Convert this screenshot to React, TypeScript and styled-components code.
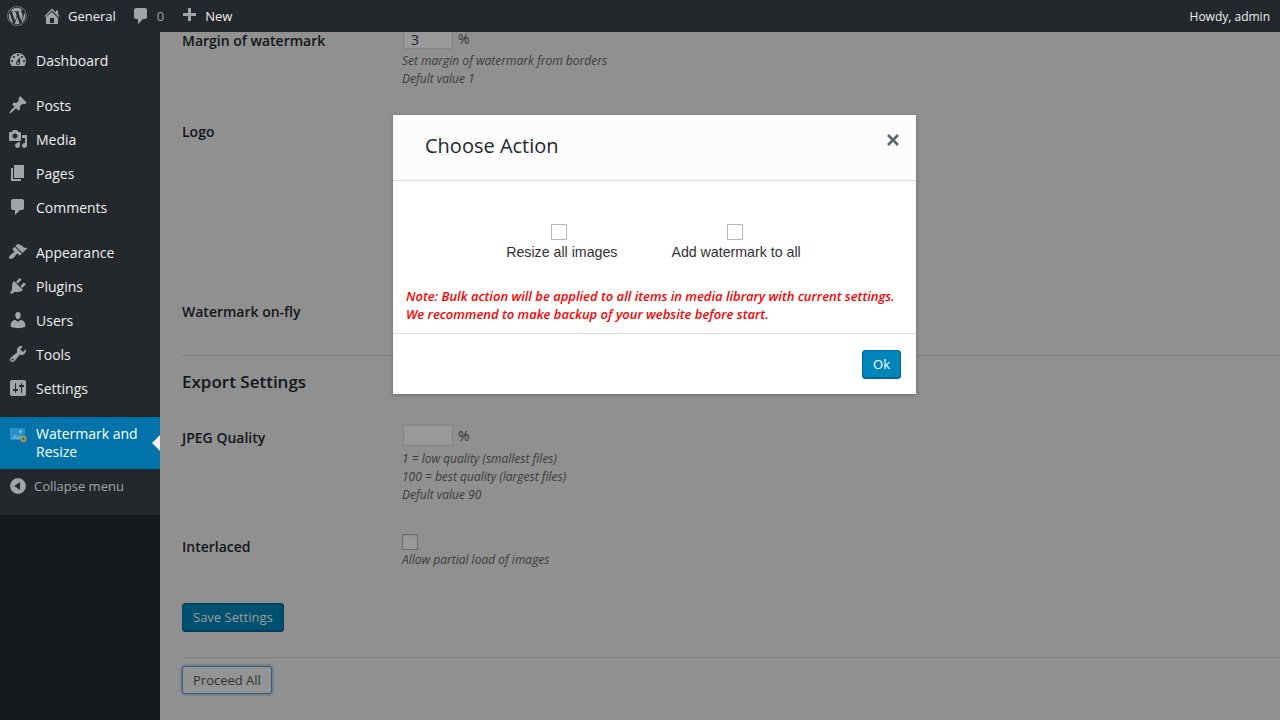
import React from 'react'
import styled, { createGlobalStyle } from 'styled-components'
import { FaWordpress } from 'react-icons/fa'

const icons: Record<string, string> = {
  home: 'M16 8.5l1.53 1.53-1.06 1.06L10 4.62l-6.47 6.47-1.06-1.06L10 2.5l4 4v-2h2v4zm-6-2.46l6 5.99V18H4v-6.97zM12 17v-5H8v5h4z',
  plus: 'M17 7v3h-5v5H9v-5H4V7h5V2h3v5h5z',
  dashboard:
    'M3.76 16h12.48c1.1-1.37 1.76-3.11 1.76-5 0-4.42-3.58-8-8-8s-8 3.58-8 8c0 1.89.66 3.63 1.76 5zM10 4c.55 0 1 .45 1 1s-.45 1-1 1-1-.45-1-1 .45-1 1-1zM6 6c.55 0 1 .45 1 1s-.45 1-1 1-1-.45-1-1 .45-1 1-1zm8 0c.55 0 1 .45 1 1s-.45 1-1 1-1-.45-1-1 .45-1 1-1zm-5.37 5.55L12 7v6c0 1.1-.9 2-2 2s-2-.9-2-2c0-.57.24-1.08.63-1.45zM4 10c.55 0 1 .45 1 1s-.45 1-1 1-1-.45-1-1 .45-1 1-1zm12 0c.55 0 1 .45 1 1s-.45 1-1 1-1-.45-1-1 .45-1 1-1zm-5 3c0-.55-.45-1-1-1s-1 .45-1 1 .45 1 1 1 1-.45 1-1z',
  post: 'M10.44 3.02l1.82-1.82 6.36 6.35-1.83 1.82c-1.05-.68-2.48-.57-3.41.36l-.75.75c-.92.93-1.04 2.35-.35 3.41l-1.83 1.82-2.41-2.41-2.8 2.79c-.42.42-3.38 2.71-3.8 2.29s1.86-3.39 2.28-3.81l2.79-2.79L4.1 9.36l1.83-1.82c1.05.69 2.48.57 3.41-.36l.75-.75c.93-.92 1.04-2.35.35-3.41z',
  media:
    'M13 11V4c0-.55-.45-1-1-1h-1.67L9 1H5L3.67 3H2c-.55 0-1 .45-1 1v7c0 .55.45 1 1 1h10c.55 0 1-.45 1-1zM7 4.5c1.38 0 2.5 1.12 2.5 2.5S8.38 9.5 7 9.5 4.5 8.38 4.5 7 5.62 4.5 7 4.5zM14 6h5v10.5c0 1.38-1.12 2.5-2.5 2.5S14 17.88 14 16.5s1.12-2.5 2.5-2.5c.17 0 .34.02.5.05V9h-3V6zm-4 8.05V13h2v3.5c0 1.38-1.12 2.5-2.5 2.5S7 17.88 7 16.5 8.12 14 9.5 14c.17 0 .34.02.5.05z',
  page: 'M6 15V2h10v13H6zm-1 1h8v2H3V5h2v11z',
  comment: 'M5 2h9c1.1 0 2 .9 2 2v7c0 1.1-.9 2-2 2h-2l-5 5v-5H5c-1.1 0-2-.9-2-2V4c0-1.1.9-2 2-2z',
  appearance:
    'M14.48 11.06L7.41 3.99l1.5-1.5c.5-.56 2.3-.47 3.51.32 1.21.8 1.43 1.28 2.91 2.1 1.18.64 2.45 1.26 4.45.85zm-.71.71L6.7 4.7 4.93 6.47c-.39.39-.39 1.02 0 1.41l1.06 1.06c.39.39.39 1.03 0 1.42-.6.6-1.43 1.11-2.21 1.69-.35.26-.7.53-1.01.84C1.43 13.23.4 15.6 1.4 16.6c1.01 1 3.37-.03 4.7-1.36.31-.31.58-.66.84-1.01.58-.78 1.09-1.61 1.69-2.21.39-.39 1.02-.39 1.41 0l1.06 1.06c.39.39 1.02.39 1.41 0z',
  plugin:
    'M13.11 4.36L9.87 7.6 8 5.73l3.24-3.24c.35-.34 1.05-.2 1.56.32.52.51.66 1.21.31 1.55zm-8 1.77l.91-1.12 9.01 9.01-1.19.84c-.71.71-2.63 1.16-3.82 1.16H6.14L4.9 17.26c-.59.59-1.54.59-2.12 0-.59-.58-.59-1.53 0-2.12l1.24-1.24v-3.88c0-1.13.4-3.19 1.09-3.89zm7.26 3.97l3.24-3.24c.34-.35 1.04-.21 1.55.31.52.51.66 1.21.31 1.55l-3.24 3.25z',
  users:
    'M10 9.25c-2.27 0-2.73-3.44-2.73-3.44C7 4.02 7.82 2 9.97 2c2.16 0 2.98 2.02 2.71 3.81 0 0-.41 3.44-2.68 3.44zm0 2.57L12.72 10c2.39 0 4.52 2.33 4.52 4.53v2.49s-3.65 1.13-7.24 1.13c-3.65 0-7.24-1.13-7.24-1.13v-2.49c0-2.25 1.94-4.48 4.47-4.48z',
  tools:
    'M16.68 9.77c-1.34 1.34-3.3 1.67-4.95.99l-5.41 6.52c-.99.99-2.59.99-3.58 0s-.99-2.59 0-3.57l6.52-5.42c-.68-1.65-.35-3.61.99-4.95 1.28-1.28 3.12-1.62 4.72-1.06l-2.89 2.89 2.82 2.82 2.86-2.87c.53 1.58.18 3.39-1.08 4.65zM3.81 16.21c.4.39 1.04.39 1.43 0 .4-.4.4-1.04 0-1.43-.39-.4-1.03-.4-1.43 0-.39.39-.39 1.03 0 1.43z',
  settings:
    'M18 16V4c0-1.1-.9-2-2-2H4c-1.1 0-2 .9-2 2v12c0 1.1.9 2 2 2h12c1.1 0 2-.9 2-2zM8 11h1c.55 0 1 .45 1 1s-.45 1-1 1H8v1.5c0 .28-.22.5-.5.5s-.5-.22-.5-.5V13H6c-.55 0-1-.45-1-1s.45-1 1-1h1V5.5c0-.28.22-.5.5-.5s.5.22.5.5V11zm5-2h-1c-.55 0-1-.45-1-1s.45-1 1-1h1V5.5c0-.28.22-.5.5-.5s.5.22.5.5V7h1c.55 0 1 .45 1 1s-.45 1-1 1h-1v5.5c0 .28-.22.5-.5.5s-.5-.22-.5-.5V9z',
  collapse: 'M10 2.16c4.33 0 7.84 3.51 7.84 7.84s-3.51 7.84-7.84 7.84S2.16 14.33 2.16 10 5.71 2.16 10 2.16zm2 11.72V6.12L6.18 9.97z',
}

const menuGroups = [
  [{ icon: 'dashboard', label: 'Dashboard' }],
  [
    { icon: 'post', label: 'Posts' },
    { icon: 'media', label: 'Media' },
    { icon: 'page', label: 'Pages' },
    { icon: 'comment', label: 'Comments' },
  ],
  [
    { icon: 'appearance', label: 'Appearance' },
    { icon: 'plugin', label: 'Plugins' },
    { icon: 'users', label: 'Users' },
    { icon: 'tools', label: 'Tools' },
    { icon: 'settings', label: 'Settings' },
  ],
]

const GlobalStyle = createGlobalStyle`
  html, body {
    margin: 0;
    height: 100%;
    overflow: hidden;
  }
  body {
    font-family: "Open Sans", "Liberation Sans", sans-serif;
    font-size: 14px;
    color: #23282d;
    background: #f1f1f1;
  }
`

const Page = styled.div`
  position: relative;
  width: 1280px;
  height: 720px;
  display: flex;
  flex-direction: column;
  overflow: hidden;
`

const AdminBar = styled.header`
  position: relative;
  z-index: 3;
  flex: 0 0 32px;
  display: flex;
  align-items: center;
  background: #23282d;
  color: #eee;
  font-size: 13px;
`

const BarItem = styled.div<{ $left: number }>`
  display: flex;
  align-items: center;
  margin-left: ${({ $left }) => $left}px;
`

const BarLabel = styled.span<{ $muted?: boolean; $gap?: number }>`
  margin-left: ${({ $gap }) => $gap ?? 0}px;
  color: ${({ $muted }) => ($muted ? '#a0a5aa' : '#eee')};
`

const Howdy = styled.div`
  margin-left: auto;
  padding-right: 10px;
  font-size: 12px;
`

const Glyph = styled.svg<{ $size?: number }>`
  flex: none;
  display: block;
  width: ${({ $size }) => $size ?? 20}px;
  height: ${({ $size }) => $size ?? 20}px;
  fill: #a0a5aa;
`

const Logo = styled(FaWordpress)`
  display: block;
  width: 20px;
  height: 20px;
  color: #a0a5aa;
`

const Columns = styled.div`
  flex: 1;
  display: flex;
  min-height: 0;
`

const Sidebar = styled.nav`
  position: relative;
  z-index: 3;
  flex: 0 0 160px;
  background: #15191d;
`

const Menu = styled.div`
  background: #23282d;
  height: 483px;
  padding-top: 11px;
  box-sizing: border-box;
`

const MenuGroup = styled.div`
  margin-bottom: 11px;
`

const MenuItem = styled.div`
  display: flex;
  align-items: center;
  height: 34px;
  padding-left: 8px;
  gap: 8px;
  color: #eee;
`

const ActiveItem = styled.div`
  position: relative;
  display: flex;
  align-items: flex-start;
  gap: 8px;
  margin-top: 12px;
  height: 52px;
  padding: 8px 0 0 8px;
  box-sizing: border-box;
  background: #0073aa;
  color: #fff;
  line-height: 18px;

  &::after {
    content: '';
    position: absolute;
    right: 0;
    top: 18px;
    border: 8px solid transparent;
    border-left-width: 0;
    border-right-color: #f1f1f1;
  }
`

const CollapseItem = styled.div`
  display: flex;
  align-items: center;
  height: 34px;
  padding-left: 8px;
  gap: 6px;
  font-size: 13px;
  color: #a0a5aa;
`

const Main = styled.main`
  flex: 1;
  min-width: 0;
  padding-left: 22px;
  overflow: hidden;
`

const Form = styled.div`
  margin-top: -1px;
`

const Row = styled.div<{ $height: number }>`
  display: grid;
  grid-template-columns: 220px 1fr;
  height: ${({ $height }) => $height}px;
`

const RowLabel = styled.div`
  font-weight: 600;
  font-size: 14px;
  line-height: 20px;
  color: #23282d;
`

const Field = styled.div<{ $top: number }>`
  margin-top: ${({ $top }) => $top}px;
`

const InputLine = styled.div`
  display: flex;
  align-items: flex-start;
  gap: 5px;
  padding-left: 1px;
`

const NumberBox = styled.div`
  box-sizing: border-box;
  width: 50px;
  height: 22px;
  padding: 4px 0 0 7px;
  line-height: 15px;
  font-size: 14px;
  color: #32373c;
  background: #fff;
  border: 1px solid #ddd;
  box-shadow: inset 0 1px 2px rgba(0, 0, 0, 0.07);
`

const Unit = styled.span`
  padding-top: 4px;
  line-height: 15px;
  color: #555;
`

const Hints = styled.div<{ $gap: number }>`
  margin-top: ${({ $gap }) => $gap}px;
  font-size: 12px;
  line-height: 18px;
  font-style: italic;
  color: #666;
`

const CheckBox = styled.div`
  box-sizing: border-box;
  width: 16px;
  height: 16px;
  background: #fff;
  border: 1px solid #b4b9be;
  box-shadow: inset 0 1px 2px rgba(0, 0, 0, 0.1);
`

const Divider = styled.hr<{ $before: number; $after: number }>`
  margin: ${({ $before }) => $before}px 0 ${({ $after }) => $after}px;
  border: 0;
  border-top: 1px solid #d5d5d5;
`

const SectionTitle = styled.h2`
  margin: 14px 0 34px;
  font-size: 17px;
  line-height: 24px;
  font-weight: 600;
  color: #23282d;
`

const Button = styled.div<{ $primary?: boolean; $focus?: boolean }>`
  box-sizing: border-box;
  display: inline-block;
  vertical-align: top;
  height: ${({ $focus }) => ($focus ? 28 : 29)}px;
  padding: 0 10px;
  border-radius: 3px;
  font-size: 13px;
  line-height: ${({ $focus }) => ($focus ? 26 : 27)}px;
  border: 1px solid ${({ $primary, $focus }) => ($primary ? '#006799' : $focus ? '#5b9dd9' : '#ccc')};
  background: ${({ $primary }) => ($primary ? '#0085ba' : '#f7f7f7')};
  color: ${({ $primary }) => ($primary ? '#fff' : '#555')};
  box-shadow: ${({ $primary, $focus }) =>
    $primary
      ? 'inset 0 -1px 0 #006799'
      : $focus
        ? '0 0 3px rgba(0, 115, 170, 0.8)'
        : 'none'};
`

const Overlay = styled.div`
  position: absolute;
  inset: 0;
  z-index: 2;
  display: flex;
  align-items: flex-start;
  padding: 115px 0 0 393px;
  box-sizing: border-box;
  background: rgba(0, 0, 0, 0.4);
`

const Modal = styled.section`
  width: 523px;
  height: 279px;
  display: flex;
  flex-direction: column;
  background: #fff;
  box-shadow: 0 1px 4px rgba(0, 0, 0, 0.25);
`

const ModalHeader = styled.div`
  display: flex;
  justify-content: space-between;
  height: 66px;
  box-sizing: border-box;
  padding: 17px 15px 0 32px;
  background: #fcfcfc;
  border-bottom: 1px solid #ddd;
`

const ModalTitle = styled.h1`
  margin: 0;
  font-size: 20px;
  line-height: 28px;
  font-weight: 500;
  color: #23282d;
`

const CloseIcon = styled.svg`
  width: 16px;
  height: 16px;
  stroke: #5d646b;
  stroke-width: 2.6;
  fill: none;
`

const ModalBody = styled.div`
  height: 153px;
  box-sizing: border-box;
  padding: 43px 13px 0;
  border-bottom: 1px solid #ddd;
`

const Options = styled.div`
  display: flex;
  justify-content: center;
  gap: 54px;
  padding-right: 2px;
`

const Option = styled.label<{ $boxShift: number }>`
  display: flex;
  flex-direction: column;
  align-items: center;
  gap: 4px;
  font-family: "Liberation Sans", Arial, sans-serif;
  font-size: 14.2px;
  line-height: 16px;
  color: #333;

  ${CheckBox} {
    margin-right: ${({ $boxShift }) => $boxShift}px;
    box-shadow: none;
  }
`

const Note = styled.p`
  margin: 27px 0 0;
  font-size: 13px;
  line-height: 18px;
  font-style: italic;
  font-weight: 600;
  color: #f00;
  white-space: nowrap;
`

const ModalFooter = styled.div`
  flex: 1;
  display: flex;
  justify-content: flex-end;
  padding: 16px 15px 0 0;
`

const Icon = ({ name, size }: { name: string; size?: number }) => (
  <Glyph $size={size} viewBox="0 0 20 20">
    <path d={icons[name]} />
  </Glyph>
)

const WatermarkIcon = () => (
  <Glyph viewBox="0 0 20 20">
    <rect x="2" y="3" width="15" height="12" rx="1" fill="#2a8fc4" />
    <circle cx="12.5" cy="6.5" r="1.5" fill="#7fc3e6" />
    <path d="M3 14l4-5 3 3 2-2 4 4z" fill="#5aa8d2" />
    <circle cx="15.5" cy="14" r="3.2" fill="#a8924a" />
    <circle cx="15.5" cy="14" r="1.2" fill="#0073aa" />
  </Glyph>
)

const App = () => (
  <Page>
    <GlobalStyle />
    <AdminBar>
      <BarItem $left={7}>
        <Logo />
      </BarItem>
      <BarItem $left={15}>
        <Icon name="home" />
        <BarLabel $gap={6}>General</BarLabel>
      </BarItem>
      <BarItem $left={15}>
        <Icon name="comment" />
        <BarLabel $muted $gap={6}>0</BarLabel>
      </BarItem>
      <BarItem $left={15}>
        <Icon name="plus" />
        <BarLabel $gap={6}>New</BarLabel>
      </BarItem>
      <Howdy>Howdy, admin</Howdy>
    </AdminBar>

    <Columns>
      <Sidebar>
        <Menu>
          {menuGroups.map((group) => (
            <MenuGroup key={group[0].label}>
              {group.map((item) => (
                <MenuItem key={item.label}>
                  <Icon name={item.icon} />
                  {item.label}
                </MenuItem>
              ))}
            </MenuGroup>
          ))}
          <ActiveItem>
            <WatermarkIcon />
            <span>
              Watermark and
              <br />
              Resize
            </span>
          </ActiveItem>
          <CollapseItem>
            <Icon name="collapse" />
            Collapse menu
          </CollapseItem>
        </Menu>
      </Sidebar>

      <Main>
        <Form>
          <Row $height={91}>
            <RowLabel>Margin of watermark</RowLabel>
            <Field $top={-4}>
              <InputLine>
                <NumberBox>3</NumberBox>
                <Unit>%</Unit>
              </InputLine>
              <Hints $gap={3}>
                Set margin of watermark from borders
                <br />
                Defult value 1
              </Hints>
            </Field>
          </Row>
          <Row $height={180}>
            <RowLabel>Logo</RowLabel>
          </Row>
          <Row $height={53}>
            <RowLabel>Watermark on-fly</RowLabel>
          </Row>
          <Divider $before={0} $after={0} />
          <SectionTitle>Export Settings</SectionTitle>
          <Row $height={109}>
            <RowLabel>JPEG Quality</RowLabel>
            <Field $top={-4}>
              <InputLine>
                <NumberBox />
                <Unit>%</Unit>
              </InputLine>
              <Hints $gap={4}>
                1 = low quality (smallest files)
                <br />
                100 = best quality (largest files)
                <br />
                Defult value 90
              </Hints>
            </Field>
          </Row>
          <Row $height={66}>
            <RowLabel>Interlaced</RowLabel>
            <Field $top={-3}>
              <CheckBox />
              <Hints $gap={1}>Allow partial load of images</Hints>
            </Field>
          </Row>
          <Button $primary>Save Settings</Button>
          <Divider $before={25} $after={8} />
          <Button $focus>Proceed All</Button>
        </Form>
      </Main>
    </Columns>

    <Overlay>
      <Modal>
        <ModalHeader>
          <ModalTitle>Choose Action</ModalTitle>
          <CloseIcon viewBox="0 0 16 16">
            <path d="M3 3l10 10M13 3L3 13" />
          </CloseIcon>
        </ModalHeader>
        <ModalBody>
          <Options>
            <Option $boxShift={5}>
              <CheckBox />
              Resize all images
            </Option>
            <Option $boxShift={3}>
              <CheckBox />
              Add watermark to all
            </Option>
          </Options>
          <Note>
            Note: Bulk action will be applied to all items in media library with current settings.
            <br />
            We recommend to make backup of your website before start.
          </Note>
        </ModalBody>
        <ModalFooter>
          <Button $primary>Ok</Button>
        </ModalFooter>
      </Modal>
    </Overlay>
  </Page>
)

export default App
